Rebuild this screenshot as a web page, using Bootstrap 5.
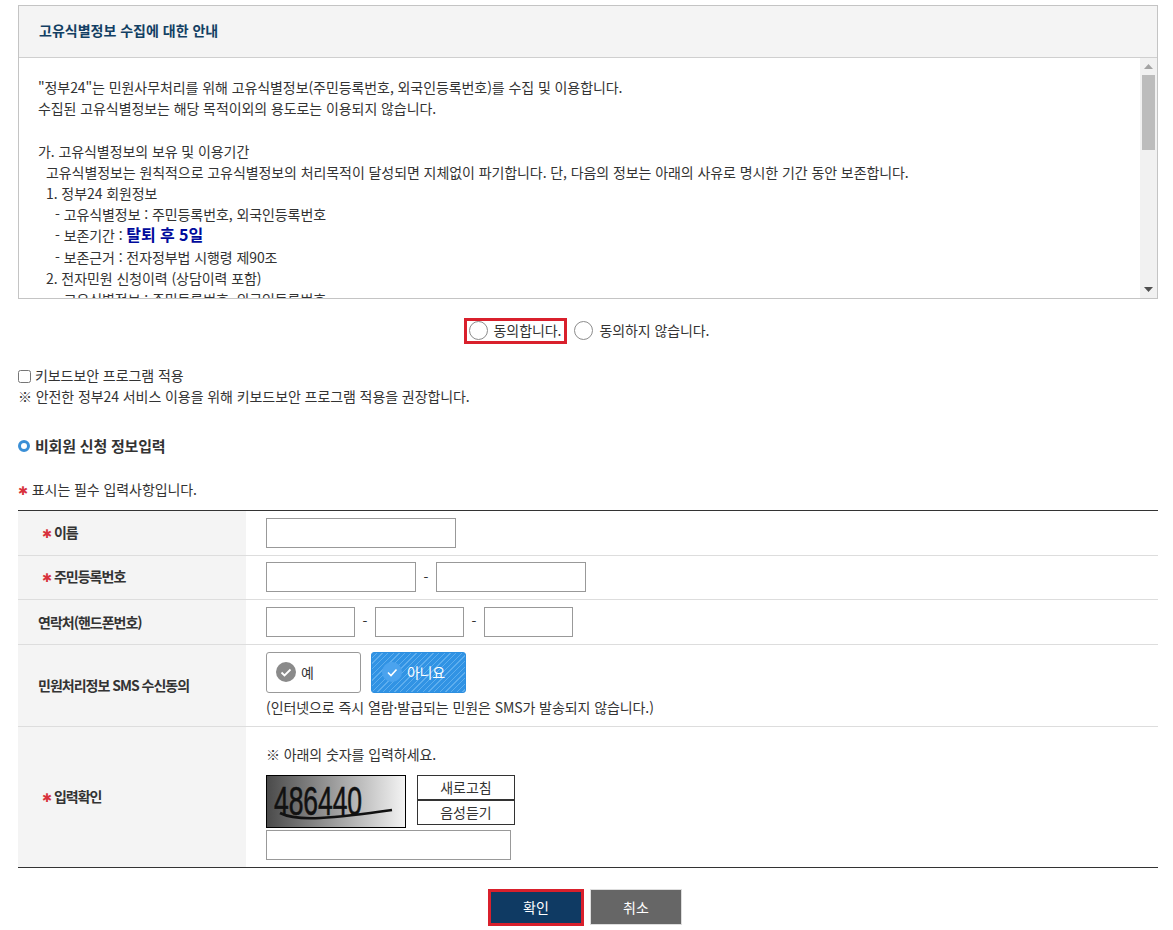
<!DOCTYPE html>
<html lang="ko">
<head>
<meta charset="utf-8">
<title>고유식별정보 수집에 대한 안내</title>
<link rel="stylesheet" href="https://cdn.jsdelivr.net/npm/bootstrap@5.3.0/dist/css/bootstrap.min.css">
<style>
html,body{background:#fff}
body{font-family:"Noto Sans CJK KR","Liberation Sans",sans-serif;font-size:14px;color:#333;letter-spacing:-.08px;line-height:21.2px;height:930px;overflow:hidden}
.page-wrap{padding:5px 15px 0 18px}
.notice-box{border:1px solid #c4c4c4;height:294px;position:relative}
.notice-head{height:52px;background:#f4f4f4;border-bottom:1px solid #cfcfcf;padding:0 20px 2px;display:flex;align-items:center;font-weight:700;color:#123f63;letter-spacing:0}
.notice-body{height:240px;overflow:hidden;padding:19px 36px 0 19px}
.rail{position:absolute;right:0;top:52px;bottom:0;width:17px;background:#f1f1f1;display:flex;flex-direction:column;align-items:center}
.rail-up,.rail-down{height:17px;display:flex;align-items:center;justify-content:center}
.rail-thumb{width:13px;height:75px;background:#bcbcbc}
.ind1{padding-left:8px}.ind2{padding-left:8px}.ind3{padding-left:17px}
.hl-period{color:#000a9c;font-weight:700;font-size:16px;line-height:1}
.agree-row{height:62px;padding-top:1px}
.agree-item{display:inline-flex;align-items:center;height:26px;padding:0 3px 0 2px;gap:6px;border:3px solid transparent;margin:0}
.agree-item.picked{border-color:#d9202c}
.agree-item.plain{padding-right:0;margin-left:2px}
.agree-dot{appearance:none;-webkit-appearance:none;width:19px;height:19px;border:1px solid #8c8c8c;border-radius:50%;background:#fff;margin:0}
.kb-wrap{margin-top:4px}
.kb-check{width:13px;height:13px;margin:0 4px 0 0;vertical-align:-2px}
.sec-title{font-size:15px;font-weight:700;margin:28px 0 0;line-height:21px;display:flex;align-items:center;gap:5px;letter-spacing:-.2px}
.ring{width:12px;height:12px;border:3px solid #3a8fd6;border-radius:50%;display:inline-block}
.star{color:#d8323c;font-weight:700;display:inline-block;font-family:"DejaVu Sans",sans-serif;font-size:12px}
.req-note{margin:23px 0 7px}
.form-grid{width:100%;border-top:1px solid #333;border-bottom:1px solid #333;border-collapse:collapse;table-layout:fixed}
.form-grid th{width:228px;background:#f4f4f4;padding:1px 0 0 20px;font-weight:700;border-bottom:1px solid #ddd;letter-spacing:-1px}
.form-grid td{padding:0 0 0 20px;border-bottom:1px solid #ddd}
.form-grid tr:last-child th,.form-grid tr:last-child td{border-bottom:0}
.form-grid th.star-cell{padding-left:24px}
.h45{height:45px}
.h44{height:44px}
.h82{height:82px}
.h141{height:141px}
.form-grid td.check-cell{vertical-align:top;padding-top:17px}
.check-hint{margin-bottom:10px}
.captcha-row{height:55px;display:flex}
.sms-row{display:flex;gap:10px;margin-bottom:4px}
.txt-in{height:30px;border:1px solid #999;background:#fff;display:block;padding:0 5px;border-radius:0}
.w190{width:190px}.w150{width:150px}.w89{width:89px}.w245{width:245px}
.dash{width:20px;text-align:center;display:inline-block}
.sms-btn{width:95px;height:41px;border-radius:3px;border:1px solid #999;background:#fff;display:flex;align-items:center;gap:5px;padding:0 0 2px 9px;color:#333;font-size:14px;letter-spacing:-.3px;line-height:1}
.sms-btn.on{border-color:#2d8fe0;color:#fff;padding-left:10px;background:repeating-linear-gradient(135deg,#3193e4 0 3px,#5eaeee 3px 4px)}
.captcha-pic{width:140px;height:53px;display:block;margin-right:11px}
.cap-btn{width:98px;height:25px;border:1px solid #333;background:#fff;color:#333;font-size:14px;letter-spacing:0;padding:0;line-height:1;display:block}
.foot-row{display:flex;justify-content:center;align-items:center;gap:6px;padding-right:6px;margin-top:21px}
.foot-btn{height:37px;color:#fff;border:0;font-size:14px;padding:0;letter-spacing:0}
.btn-ok{width:96px;background:#0f3a63;border:3px solid #d9202c}
.btn-no{width:92px;height:36px;background:#666;border:1px solid #ddd}
</style>
</head>
<body>
<div class="page-wrap">
  <section class="notice-box">
    <div class="notice-head">고유식별정보 수집에 대한 안내</div>
    <div class="notice-body">
        <div>"정부24"는 민원사무처리를 위해 고유식별정보(주민등록번호, 외국인등록번호)를 수집 및 이용합니다.</div>
        <div>수집된 고유식별정보는 해당 목적이외의 용도로는 이용되지 않습니다.</div>
        <div>&nbsp;</div>
        <div>가. 고유식별정보의 보유 및 이용기간</div>
        <div class="ind1">고유식별정보는 원칙적으로 고유식별정보의 처리목적이 달성되면 지체없이 파기합니다. 단, 다음의 정보는 아래의 사유로 명시한 기간 동안 보존합니다.</div>
        <div class="ind2">1. 정부24 회원정보</div>
        <div class="ind3">- 고유식별정보 : 주민등록번호, 외국인등록번호</div>
        <div class="ind3">- 보존기간 : <span class="hl-period">탈퇴 후 5일</span></div>
        <div class="ind3">- 보존근거 : 전자정부법 시행령 제90조</div>
        <div class="ind2">2. 전자민원 신청이력 (상담이력 포함)</div>
        <div class="ind3">- 고유식별정보 : 주민등록번호, 외국인등록번호</div>
    </div>
    <div class="rail" aria-hidden="true">
      <div class="rail-up"><svg width="9" height="5" viewBox="0 0 9 5"><path d="M4.5 0L9 5H0z" fill="#a3a3a3"/></svg></div>
      <div class="rail-thumb"></div>
      <div class="flex-grow-1"></div>
      <div class="rail-down"><svg width="9" height="5" viewBox="0 0 9 5"><path d="M0 0h9L4.5 5z" fill="#505050"/></svg></div>
    </div>
  </section>

  <div class="agree-row d-flex justify-content-center align-items-center">
    <label class="agree-item picked"><input class="agree-dot" type="radio" name="agree"><span>동의합니다.</span></label>
    <label class="agree-item plain"><input class="agree-dot" type="radio" name="agree"><span>동의하지 않습니다.</span></label>
  </div>

  <div class="kb-wrap">
    <label class="d-block m-0"><input class="kb-check" type="checkbox">키보드보안 프로그램 적용</label>
    <div>※ 안전한 정부24 서비스 이용을 위해 키보드보안 프로그램 적용을 권장합니다.</div>
  </div>

  <h2 class="sec-title"><span class="ring"></span>비회원 신청 정보입력</h2>
  <p class="req-note"><span class="star">✱</span> 표시는 필수 입력사항입니다.</p>

  <table class="form-grid">
    <tr class="h45">
      <th class="star-cell"><span class="star">✱</span> 이름</th>
      <td><input class="txt-in w190" type="text" aria-label="이름"></td>
    </tr>
    <tr class="h44">
      <th class="star-cell"><span class="star">✱</span> 주민등록번호</th>
      <td><div class="d-flex align-items-center"><input class="txt-in w150" type="text" aria-label="주민등록번호 앞자리"><span class="dash">-</span><input class="txt-in w150" type="text" aria-label="주민등록번호 뒷자리"></div></td>
    </tr>
    <tr class="h45">
      <th>연락처(핸드폰번호)</th>
      <td><div class="d-flex align-items-center"><input class="txt-in w89" type="text" aria-label="국번"><span class="dash">-</span><input class="txt-in w89" type="text" aria-label="중간번호"><span class="dash">-</span><input class="txt-in w89" type="text" aria-label="끝번호"></div></td>
    </tr>
    <tr class="h82">
      <th>민원처리정보 SMS 수신동의</th>
      <td>
        <div class="sms-row">
          <button class="sms-btn" type="button"><svg width="20" height="20" viewBox="0 0 20 20"><circle cx="10" cy="10" r="10" fill="#8a8a8a"/><path d="M5.5 10.5l3 3 6-6" fill="none" stroke="#fff" stroke-width="1.8"/></svg>예</button>
          <button class="sms-btn on" type="button"><svg width="20" height="20" viewBox="0 0 20 20"><circle cx="10" cy="10" r="10" fill="#4ba3ee"/><path d="M6 10.5l3 3 5.5-6" fill="none" stroke="#fff" stroke-width="1.6"/></svg>아니요</button>
        </div>
        <div>(인터넷으로 즉시 열람·발급되는 민원은 SMS가 발송되지 않습니다.)</div>
      </td>
    </tr>
    <tr class="h141">
      <th class="star-cell"><span class="star">✱</span> 입력확인</th>
      <td class="check-cell">
        <div class="check-hint">※ 아래의 숫자를 입력하세요.</div>
        <div class="captcha-row">
          <svg class="captcha-pic" viewBox="0 0 140 53" role="img" aria-label="보안문자">
            <defs><linearGradient id="capg" x1="0" x2="1" y1="0" y2="0"><stop offset="0" stop-color="#4a4a4a"/><stop offset="1" stop-color="#f4f4f4"/></linearGradient></defs>
            <rect x=".5" y=".5" width="139" height="52" fill="url(#capg)" stroke="#000"/>
            <text transform="translate(8 40) scale(1 1.45)" font-family="Liberation Sans,sans-serif" font-size="28" textLength="88" lengthAdjust="spacingAndGlyphs" fill="#111" stroke="#111" stroke-width=".4">486440</text>
            <path d="M14 38c10 5 22 6 40 5s44-4 72-8" fill="none" stroke="#111" stroke-width="2.6"/>
          </svg>
          <div>
            <button class="cap-btn" type="button">새로고침</button>
            <button class="cap-btn" type="button">음성듣기</button>
          </div>
        </div>
        <input class="txt-in w245" type="text" aria-label="입력확인">
      </td>
    </tr>
  </table>

  <div class="foot-row">
    <button class="foot-btn btn-ok" type="button">확인</button>
    <button class="foot-btn btn-no" type="button">취소</button>
  </div>
</div>
<script src="https://cdn.jsdelivr.net/npm/bootstrap@5.3.0/dist/js/bootstrap.bundle.min.js"></script>
</body>
</html>
